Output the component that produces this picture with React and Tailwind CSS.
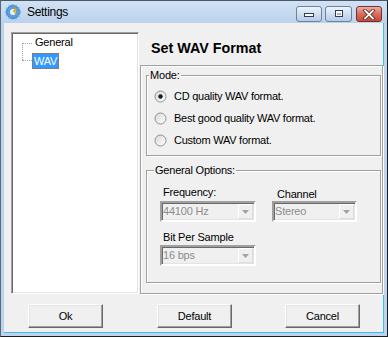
import React from "react";

const font = "font-['Liberation_Sans',Arial,sans-serif]";

const AppIcon = () => (
  <svg width="16" height="16" viewBox="0 0 16 16">
    <circle cx="8" cy="8" r="6.5" fill="#5aa0e0" stroke="#2c6fb5" strokeWidth="1" />
    <circle cx="8" cy="8" r="7.2" fill="none" stroke="#7db8ec" strokeWidth="1.6" strokeDasharray="2 1.6" />
    <circle cx="8" cy="8" r="3" fill="#e8f2fc" />
    <path d="M9 2 L11.5 6 L9.5 6.5 L12 11 L8 7 L10 6.5 Z" fill="#f5c518" stroke="#c48a00" strokeWidth="0.5" />
  </svg>
);

const CaptionButton = ({ kind, className }) => {
  const isClose = kind === "close";
  return (
    <div
      className={
        "flex h-[16px] items-center justify-center rounded-[3px] border " +
        (isClose
          ? "border-[#7a2f26] bg-gradient-to-b from-[#eab0a4] via-[#d66d5d] to-[#c9483a] "
          : "border-[#6e819b] bg-gradient-to-b from-[#eef4fb] via-[#d0dff1] to-[#b6cbe6] ") +
        className
      }
    >
      {kind === "min" && (
        <svg width="12" height="8" viewBox="0 0 12 8">
          <rect x="1.5" y="3.5" width="9" height="3" fill="#fff" stroke="#2d3f57" />
        </svg>
      )}
      {kind === "max" && (
        <svg width="12" height="10" viewBox="0 0 12 10">
          <rect x="2.5" y="1.5" width="7" height="6" fill="#fff" stroke="#2d3f57" />
          <rect x="4" y="4" width="4" height="2" fill="#9fb6d3" />
        </svg>
      )}
      {kind === "close" && (
        <svg width="14" height="11" viewBox="0 0 14 11">
          <path d="M3 1.5 L11 9.5 M11 1.5 L3 9.5" stroke="#5a1f18" strokeWidth="3.4" strokeLinecap="square" />
          <path d="M3 1.5 L11 9.5 M11 1.5 L3 9.5" stroke="#fff" strokeWidth="1.8" strokeLinecap="square" />
        </svg>
      )}
    </div>
  );
};

const Radio = ({ checked, label }) => (
  <div className="flex h-[22px] items-center pl-[7px]">
    <svg width="13" height="13" viewBox="0 0 13 13">
      <defs>
        <linearGradient id="rg" x1="0" y1="0" x2="1" y2="1">
          <stop offset="0" stopColor="#d8d8d8" />
          <stop offset="1" stopColor="#ffffff" />
        </linearGradient>
      </defs>
      <circle cx="6.5" cy="6.5" r="5.5" fill="url(#rg)" stroke="#8e8f8f" strokeWidth="1" />
      {checked && <circle cx="6.5" cy="6.5" r="2.2" fill="#1b1b1b" />}
    </svg>
    <span className="ml-[7px] text-[11px] leading-[13px] tracking-[-0.25px] text-black">{label}</span>
  </div>
);

const Combo = ({ value, width }) => (
  <div
    className={
      "flex h-[21px] items-stretch border-2 border-t-[#a0a0a0] border-l-[#a0a0a0] border-b-white border-r-white bg-[#f0f0f0] shadow-[inset_1px_1px_0_#696969,inset_-1px_-1px_0_#e3e3e3] " +
      width
    }
  >
    <span className="flex flex-1 items-center pl-px text-[11px] tracking-[-0.2px] text-[#8d8d8d]">{value}</span>
    <div className="my-px mr-px flex w-[15px] items-center justify-center border border-t-white border-l-white border-b-[#dcdcdc] border-r-[#dcdcdc] bg-[#f0f0f0]">
      <svg width="7" height="4" viewBox="0 0 7 4">
        <path d="M0 0 H7 L3.5 4 Z" fill="#a3a3a3" />
      </svg>
    </div>
  </div>
);

const Button = ({ label, className }) => (
  <button
    className={
      "flex h-[24px] w-[75px] items-center justify-center border border-t-white border-l-white border-b-[#696969] border-r-[#696969] bg-[#f0f0f0] text-[11px] tracking-[-0.2px] text-black shadow-[inset_-1px_-1px_0_#a0a0a0,inset_1px_1px_0_#e3e3e3] " +
      className
    }
  >
    {label}
  </button>
);

const etched = "border border-[#a0a0a0] shadow-[inset_1px_1px_0_#fff,1px_1px_0_#fff]";

export default function App() {
  return (
    <div className={"flex h-[337px] w-[388px] flex-col border border-t-[#4a5968] border-l-[#59697c] border-b-[#1d1d1d] border-r-[#1d1d1d] bg-[#bdd2eb] " + font}>
      {/* title bar */}
      <div className="flex h-[22px] items-start bg-gradient-to-b from-[#d2e2f5] to-[#bcd2ec]">
        <div className="mt-[3px] ml-[4px]">
          <AppIcon />
        </div>
        <span className="mt-[4px] ml-[6px] text-[12px] leading-[14px] tracking-[-0.3px] text-black">Settings</span>
        <div className="ml-auto mt-[5px] mr-[5px] flex">
          <CaptionButton kind="min" className="w-[26px]" />
          <CaptionButton kind="max" className="ml-[3px] w-[27px]" />
          <CaptionButton kind="close" className="ml-[4px] w-[26px]" />
        </div>
      </div>

      {/* client */}
      <div className="mx-[3px] mb-[3px] flex flex-1 flex-col border-r border-b border-r-[#3fbde9] border-b-[#3fbde9] bg-[#f0f0f0] pt-[9px]">
        <div className="flex pl-[7px]">
          {/* tree */}
          <div className="relative h-[262px] w-[128px] border border-t-[#a0a0a0] border-l-[#a0a0a0] border-b-white border-r-white bg-white shadow-[inset_1px_1px_0_#696969,inset_-1px_-1px_0_#e3e3e3]">
            <div className="flex pt-[3px] pl-[10px]">
              <div className="mt-[7px] h-[17px] w-[10px] border-t border-l border-dotted border-[#a0a0a0]" />
              <div className="flex flex-col">
                <span className="ml-[3px] h-[13px] text-[11px] leading-[13px] tracking-[-0.2px] text-black">General</span>
              </div>
            </div>
            <div className="-mt-[7px] flex pl-[10px]">
              <div className="mt-[7px] h-0 w-[10px] border-t border-dotted border-[#a0a0a0]" />
              <span className="h-[16px] border border-dotted border-[#c46200] bg-[#3399ff] px-[1px] text-[11px] leading-[14px] tracking-[-0.2px] text-white">
                WAV
              </span>
            </div>
          </div>

          {/* right column */}
          <div className="ml-px flex w-[243px] flex-col">
            <div className="flex h-[33px] items-center pl-[11px] text-[14.3px] font-bold text-black">Set WAV Format</div>
            <div className={"h-[229px] pl-[5px] pr-[1px] " + etched}>
              <fieldset className={"mt-[3px] " + etched}>
                <legend className="ml-[2px] bg-[#f0f0f0] px-px text-[11px] leading-[13px] tracking-[-0.2px] text-black">Mode:</legend>
                <div className="pt-[3px] pb-[4px]">
                  <Radio checked label="CD quality WAV format." />
                  <Radio label="Best good quality WAV format." />
                  <Radio label="Custom WAV format." />
                </div>
              </fieldset>

              <fieldset className={"mt-[8px] " + etched}>
                <legend className="ml-[7px] bg-[#f0f0f0] px-px text-[11px] leading-[13px] tracking-[-0.2px] text-black">General Options:</legend>
                <div className="pl-[13px] pb-[16px]">
                  <div className="flex">
                    <div className="flex flex-col pt-[9px]">
                      <span className="ml-[3px] text-[11px] leading-[13px] tracking-[-0.2px] text-black">Frequency:</span>
                      <div className="mt-[2px]">
                        <Combo value="44100 Hz" width="w-[96px]" />
                      </div>
                    </div>
                    <div className="ml-[16px] flex flex-col pt-[11px]">
                      <span className="ml-[5px] text-[11px] leading-[13px] tracking-[-0.2px] text-black">Channel</span>
                      <Combo value="Stereo" width="w-[85px]" />
                    </div>
                  </div>
                  <div className="mt-[9px] flex flex-col">
                    <span className="ml-[3px] text-[11px] leading-[13px] tracking-[-0.2px] text-black">Bit Per Sample</span>
                    <div className="mt-px">
                      <Combo value="16 bps" width="w-[96px]" />
                    </div>
                  </div>
                </div>
              </fieldset>
            </div>
          </div>
        </div>

        {/* buttons */}
        <div className="mt-[10px] flex pl-[24px]">
          <Button label="Ok" />
          <Button label="Default" className="ml-[54px]" />
          <Button label="Cancel" className="ml-[53px]" />
        </div>
      </div>
    </div>
  );
}
